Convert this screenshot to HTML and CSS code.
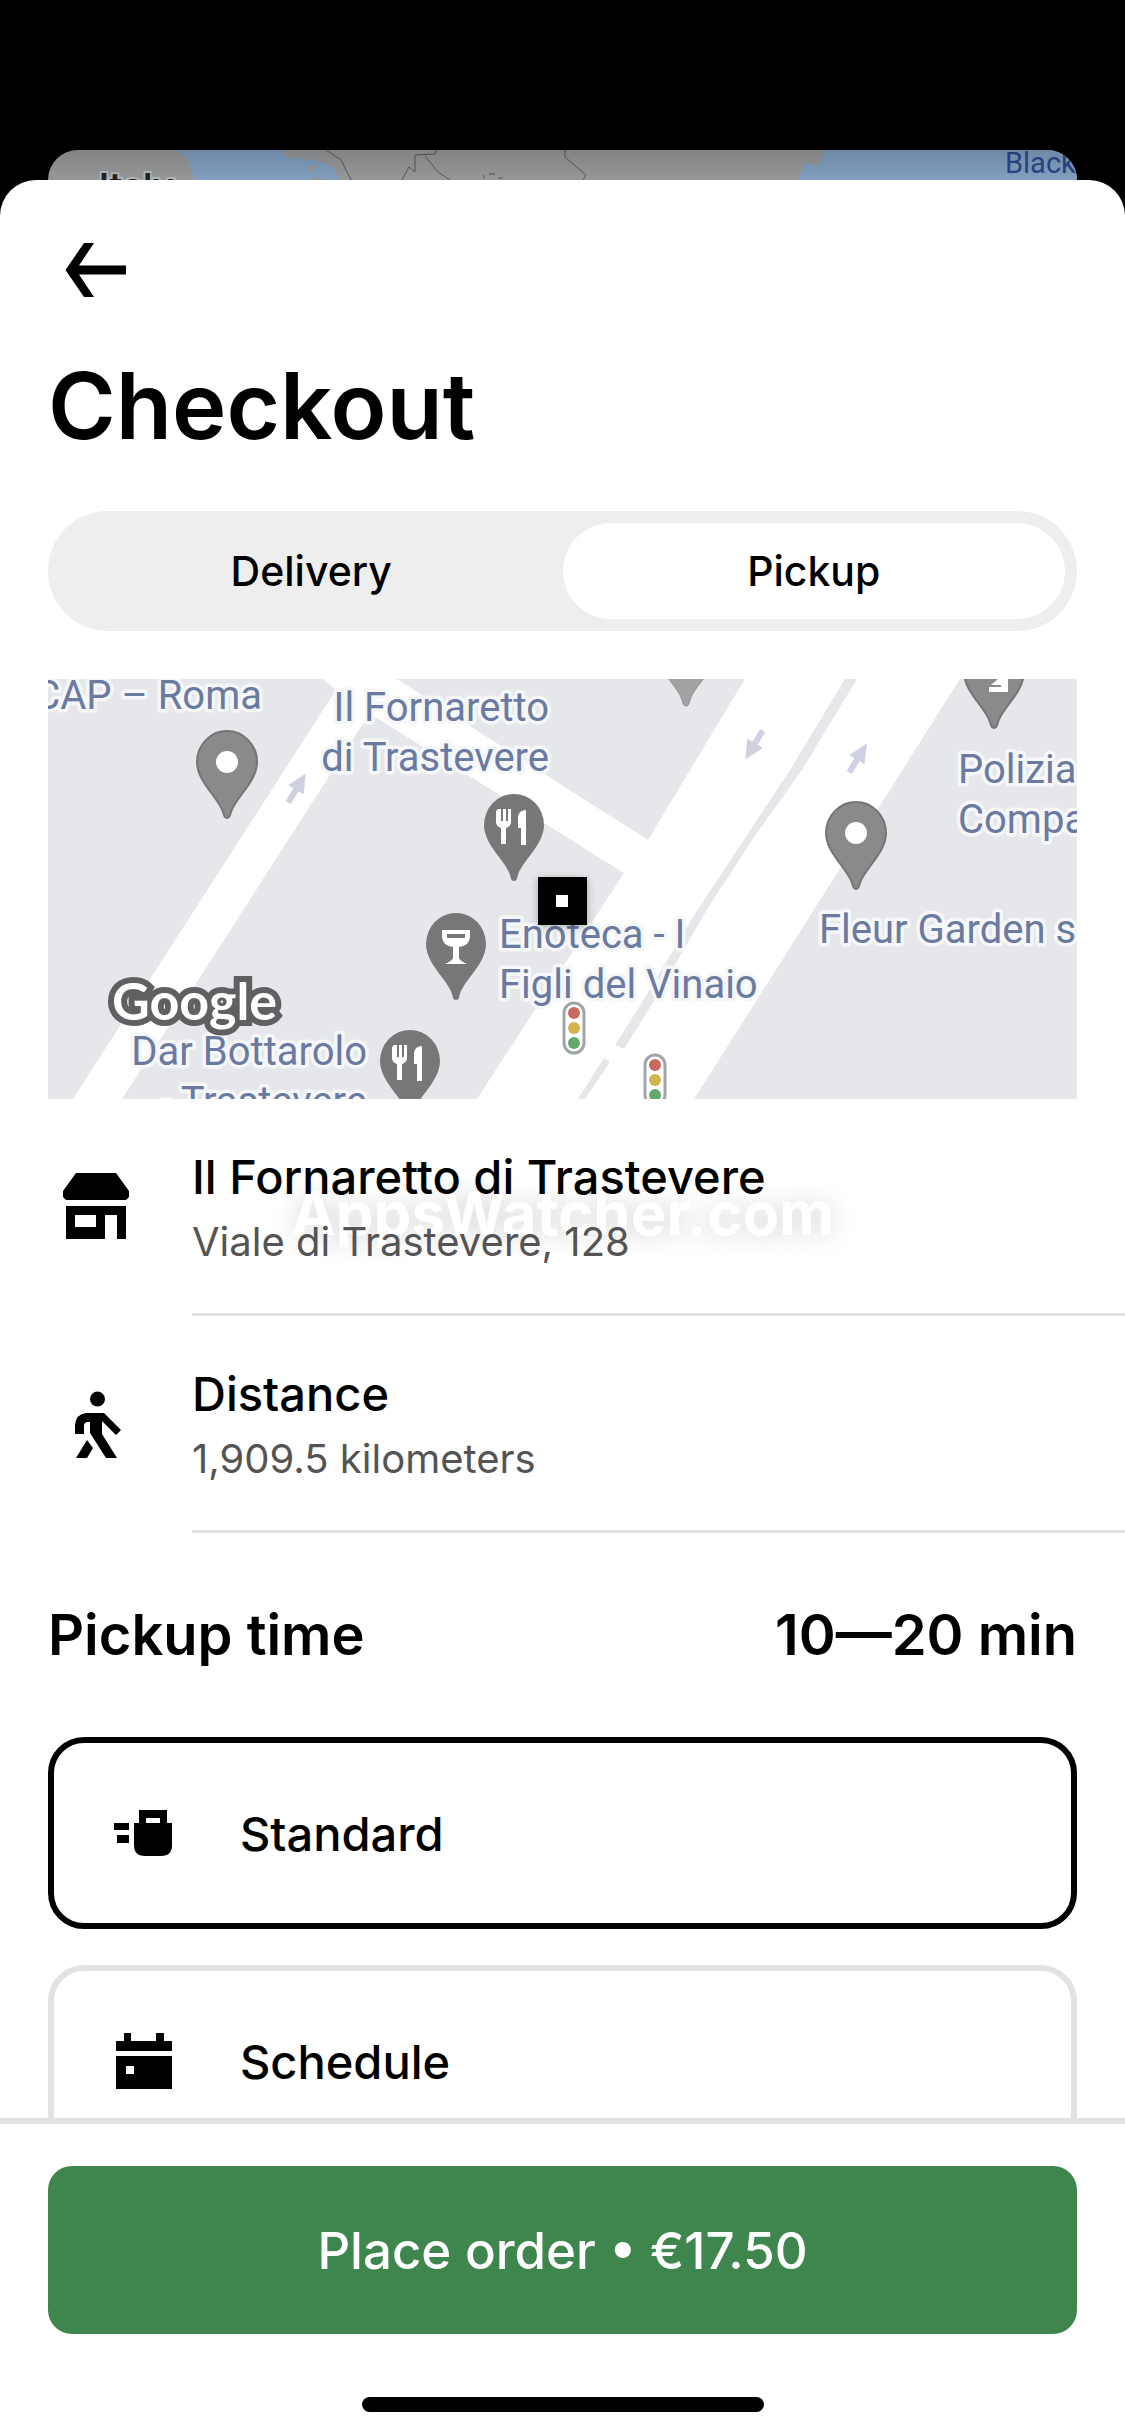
FILE: index.html
```html
<!DOCTYPE html>
<html lang="en">
<head>
<meta charset="utf-8">
<meta name="viewport" content="width=device-width, initial-scale=1">
<title>Checkout</title>
<link rel="stylesheet" href="styles.css">
</head>
<body>
<div class="app">
  <div class="backdrop" aria-hidden="true">
    <svg class="backdrop-map" viewBox="0 0 1029 30" preserveAspectRatio="xMidYMin slice">
      <defs>
        <linearGradient id="shade" x1="0" y1="0" x2="0" y2="1">
          <stop offset="0" stop-color="#000" stop-opacity=".14"/>
          <stop offset="1" stop-color="#000" stop-opacity="0"/>
        </linearGradient>
      </defs>
      <rect width="1029" height="30" fill="#969798"/>
      <path fill="#819fc0" d="M128 0H235L239 8L256 9L278 13L286 19L293 30H146L140 8ZM777 0L771 15L757 13L750 30H1029V0Z"/>
      <path fill="#969798" d="M258 17l12-2-5 7zM262 30l8-3 8 3z"/>
      <g fill="none" stroke="#55585b" stroke-width="1">
        <path d="M278 0L293 10L303 30M354 30L361 17L367 22V5L387 4L388 0M377 6L390 22L402 30M517 0V7L538 25L535 30M435 25l2 4M441 24h6M450 28h5"/>
      </g>
      <text x="51" y="49" class="country">Italy</text>
      <text x="957" y="23" class="sea">Black Sea</text>
      <rect width="1029" height="30" fill="url(#shade)"/>
    </svg>
  </div>

  <main class="sheet">
    <div class="content">
      <header class="header">
        <button class="back" type="button" aria-label="Back">
          <svg class="icon" viewBox="0 0 72 72"><path d="M66 31.500H19L34 9H24L5.500 36L24 63H34L19 40.500H66Z"/></svg>
        </button>
        <h1 class="title">Checkout</h1>
        <div class="segmented" role="radiogroup" aria-label="Order type">
          <label class="segment"><input type="radio" name="mode" class="hidden-input"><span class="segment-text">Delivery</span></label>
          <label class="segment"><input type="radio" name="mode" class="hidden-input" checked><span class="segment-text">Pickup</span></label>
        </div>
        <svg class="map" viewBox="0 0 1029 420" role="img" aria-label="Map of the pickup place">
          <defs>
            <path id="pin" d="M0 56C-3 56-3 53-4 50C-8 36-30 20-30 0A30 31 0 0 1 30 0C30 20 8 36 4 50C3 53 3 56 0 56Z"/>
            <g id="meal" fill="#fff"><path d="M-16-16h3v12h2v-12h3v12h2v-12h3v14q-1 4-5 5v16h-5V3q-4-1-5-5V-14zM12-15V20H7V3H4V-8Q5-15 12-15z"/></g>
            <g id="lights">
              <rect x="-10" y="-25" width="20" height="50" rx="10" fill="#fff" stroke="#a0a5a9" stroke-width="3"/>
              <circle cy="-15" r="6" fill="#c96a5e"/><circle r="6" fill="#d6b24c"/><circle cy="15" r="6" fill="#62a96b"/>
            </g>
            <path id="arrow" fill="#cfd0e0" d="M0-17L9 2H3V17H-3V2H-9Z"/>
          </defs>
          <rect width="1029" height="420" fill="#e6e7ea"/>
          <path fill="#fff" d="M275 0H349L512 105L600 161L697 0H912L646 420H429L576 194L512 154L329 39Q318 40 312 49L74 420H25L288 11Z"/>
          <path fill="#e6e7ea" d="M797 0H809L754 91L706 158L658 232L608 319L576 370L567 366L599 315L645 238L699 156L742 91ZM556 379L562 383L537 420H530Z"/>
          <use href="#arrow" transform="translate(249 109) rotate(31)"/>
          <use href="#arrow" transform="translate(706 66) rotate(211)"/>
          <use href="#arrow" transform="translate(810 79) rotate(31)"/>
          <g fill="#8a8a8a" stroke="#757575" stroke-width="2">
            <use href="#pin" x="179" y="83"/>
            <use href="#pin" x="808" y="154"/>
            <use href="#pin" x="946" y="-7"/>
          </g>
          <use href="#pin" x="638" y="-29" fill="#a2a2a2" stroke="#8d8d8d"/>
          <path fill="#fff" d="M941 0h19v13h-19V8h12V6h-10l7-6z"/>
          <circle cx="179" cy="83" r="11" fill="#fff"/>
          <circle cx="808" cy="154" r="11" fill="#fff"/>
          <g fill="#777">
            <use href="#pin" x="466" y="146"/>
            <use href="#pin" x="408" y="265"/>
            <use href="#pin" x="362" y="382"/>
          </g>
          <use href="#meal" x="466" y="146"/>
          <use href="#meal" x="362" y="382"/>
          <path fill="#fff" fill-rule="evenodd" d="M394 251H422V258Q421 267 411 268V279Q412 282 419 285H397Q404 282 405 279V268Q395 267 394 258ZM399 255V259H417V255Z"/>
          <g class="place">
            <text x="214" y="30" text-anchor="end">CAP – Roma</text>
            <text x="501" y="42" text-anchor="end">Il Fornaretto</text>
            <text x="501" y="92" text-anchor="end">di Trastevere</text>
            <text x="451" y="269">Enoteca - I</text>
            <text x="451" y="319">Figli del Vinaio</text>
            <text x="319" y="386" text-anchor="end">Dar Bottarolo</text>
            <text x="319" y="436" text-anchor="end">- Trastevere</text>
            <text x="910" y="104">Polizia</text>
            <text x="910" y="154">Compagnia</text>
            <text x="771" y="264">Fleur Garden s</text>
          </g>
          <use href="#lights" x="526" y="349"/>
          <use href="#lights" x="607" y="401"/>
          <text x="64" y="341" class="google">Google</text>
          <rect x="490" y="198" width="49" height="48" class="marker"/>
          <rect x="508" y="216" width="12" height="12" fill="#fff"/>
        </svg>
      </header>

      <section class="details">
        <div class="watermark" aria-hidden="true">AppsWatcher.com</div>
        <div class="row">
          <svg class="icon" viewBox="0 2 72 72"><path fill-rule="evenodd" d="M16 3H56L69 21V27L66 30H6L3 27V21ZM6 36H66V69H57V45H45V69H6ZM15 45V57H36V45Z"/></svg>
          <div class="row-text">
            <div class="row-title">Il Fornaretto di Trastevere</div>
            <div class="row-sub">Viale di Trastevere, 128</div>
          </div>
        </div>
        <div class="row">
          <svg class="icon" viewBox="0 0 72 72"><circle cx="37.500" cy="10" r="7.500"/><path d="M15 45V36Q16 25 26 24H44L61 41L56 46L42 32V45L57 69H46L30 44V33H28Q24 33 24 37V45ZM27 51L33 59L27 69H16Z"/></svg>
          <div class="row-text">
            <div class="row-title">Distance</div>
            <div class="row-sub">1,909.5 kilometers</div>
          </div>
        </div>
      </section>

      <section class="pickup">
        <h2 class="pickup-head"><span>Pickup time</span><span>10—20 min</span></h2>
        <div class="options" role="radiogroup" aria-label="Pickup time">
          <label class="option">
            <input type="radio" name="time" class="hidden-input" checked>
            <svg class="icon" viewBox="0 0 72 72"><path fill-rule="evenodd" d="M6 26H21V33H6ZM9 38H21V46H9ZM31 13H59V26H64V48Q64 59 53 59H37Q26 59 26 48V26H31ZM38 21V26H52V21Z"/></svg>
            <span>Standard</span>
          </label>
          <label class="option">
            <input type="radio" name="time" class="hidden-input">
            <svg class="icon" viewBox="0 0 72 72"><path fill-rule="evenodd" d="M8 16H16V8H23V16H48V8H56V16H64V26H8ZM8 31H64V64H8ZM18 41V49H26V41Z"/></svg>
            <span>Schedule</span>
          </label>
        </div>
      </section>
    </div>

    <footer class="footer">
      <button class="order" type="button">Place order • €17.50</button>
      <div class="home-bar"></div>
    </footer>
  </main>
</div>
</body>
</html>
```
FILE: styles.css
```css
* {
  box-sizing: border-box;
}

body {
  margin: 0;
  background: #000;
  color: #000;
  font-family: "Inter", "Liberation Sans", sans-serif;
}

.app {
  display: flex;
  flex-direction: column;
  height: 100vh;
  padding-top: 150px;
}

.backdrop {
  flex: none;
  height: 30px;
  margin: 0 48px;
  border-radius: 30px 30px 0 0;
  overflow: hidden;
}

.backdrop-map {
  display: block;
  width: 100%;
}

.country {
  font-size: 36px;
  font-weight: 600;
  fill: #222;
  stroke: #b4b5b6;
  stroke-width: 4px;
  paint-order: stroke;
}

.sea {
  font-family: "Roboto", sans-serif;
  font-size: 29px;
  fill: #2c4687;
}

.sheet {
  flex: 1;
  min-height: 0;
  display: flex;
  flex-direction: column;
  background: #fff;
  border-radius: 36px 36px 0 0;
  overflow: hidden;
}

.content {
  flex: 1;
  min-height: 0;
  overflow-y: auto;
  scrollbar-width: none;
}

.header {
  padding: 54px 48px 0;
}

.back {
  display: block;
  margin: 0 12px;
  padding: 0;
  border: 0;
  background: none;
}

.icon {
  display: block;
  flex: none;
  width: 72px;
  height: 72px;
}

.title {
  margin: 46px 0 51px;
  font-size: 92px;
  line-height: 108px;
  font-weight: 600;
}

.hidden-input {
  position: absolute;
  opacity: 0;
  pointer-events: none;
}

.segmented {
  display: flex;
  height: 120px;
  padding: 12px;
  border-radius: 60px;
  background: #eee;
}

.segment {
  flex: 1;
  display: flex;
}

.segment-text {
  flex: 1;
  display: flex;
  align-items: center;
  justify-content: center;
  border-radius: 48px;
  font-size: 41px;
  font-weight: 500;
}

.hidden-input:checked + .segment-text {
  background: #fff;
}

.map {
  display: block;
  width: 100%;
  margin-top: 48px;
}

.place {
  font-family: "Roboto", sans-serif;
  font-size: 40px;
  fill: #6b7aa1;
  stroke: #f6f7f9;
  stroke-width: 7px;
  stroke-linejoin: round;
  paint-order: stroke;
}

.google {
  font-family: "Lato", sans-serif;
  font-size: 52px;
  font-weight: 700;
  fill: #fff;
  stroke: #5f6062;
  stroke-width: 12px;
  paint-order: stroke;
}

.marker {
  filter: drop-shadow(0 2px 4px rgba(0, 0, 0, 0.3));
}

.details {
  position: relative;
  isolation: isolate;
}

.watermark {
  position: absolute;
  z-index: -1;
  top: 78px;
  left: 0;
  right: 0;
  text-align: center;
  font-size: 60px;
  line-height: 72px;
  font-weight: 700;
  color: #fff;
  text-shadow: 0 2px 26px rgba(0, 0, 0, 0.18);
}

.row {
  display: flex;
  align-items: center;
  gap: 60px;
  padding-left: 60px;
}

.row-text {
  flex: 1;
  padding: 45px 0 39px;
  border-bottom: 3px solid #e2e2e2;
}

.row-title {
  font-size: 47px;
  line-height: 66px;
  font-weight: 500;
}

.row-sub {
  font-size: 40px;
  line-height: 64px;
  color: #545454;
}

.pickup {
  padding: 66px 48px 48px;
}

.pickup-head {
  display: flex;
  justify-content: space-between;
  margin: 0 0 66px;
  font-size: 56px;
  line-height: 72px;
  font-weight: 600;
}

.options {
  display: flex;
  flex-direction: column;
  gap: 36px;
}

.option {
  display: flex;
  align-items: center;
  gap: 60px;
  height: 192px;
  padding: 0 54px;
  border: 6px solid #e2e2e2;
  border-radius: 36px;
  font-size: 47px;
  font-weight: 500;
}

.option:has(:checked) {
  border-color: #000;
}

.footer {
  flex: none;
  padding: 42px 48px 24px;
  border-top: 6px solid #e2e2e2;
}

.order {
  display: block;
  width: 100%;
  height: 168px;
  border: 0;
  border-radius: 24px;
  background: #3e864d;
  color: #fff;
  font-family: inherit;
  font-size: 51px;
  font-weight: 500;
}

.home-bar {
  width: 402px;
  height: 15px;
  margin: 63px auto 0;
  border-radius: 8px;
  background: #000;
}
```
